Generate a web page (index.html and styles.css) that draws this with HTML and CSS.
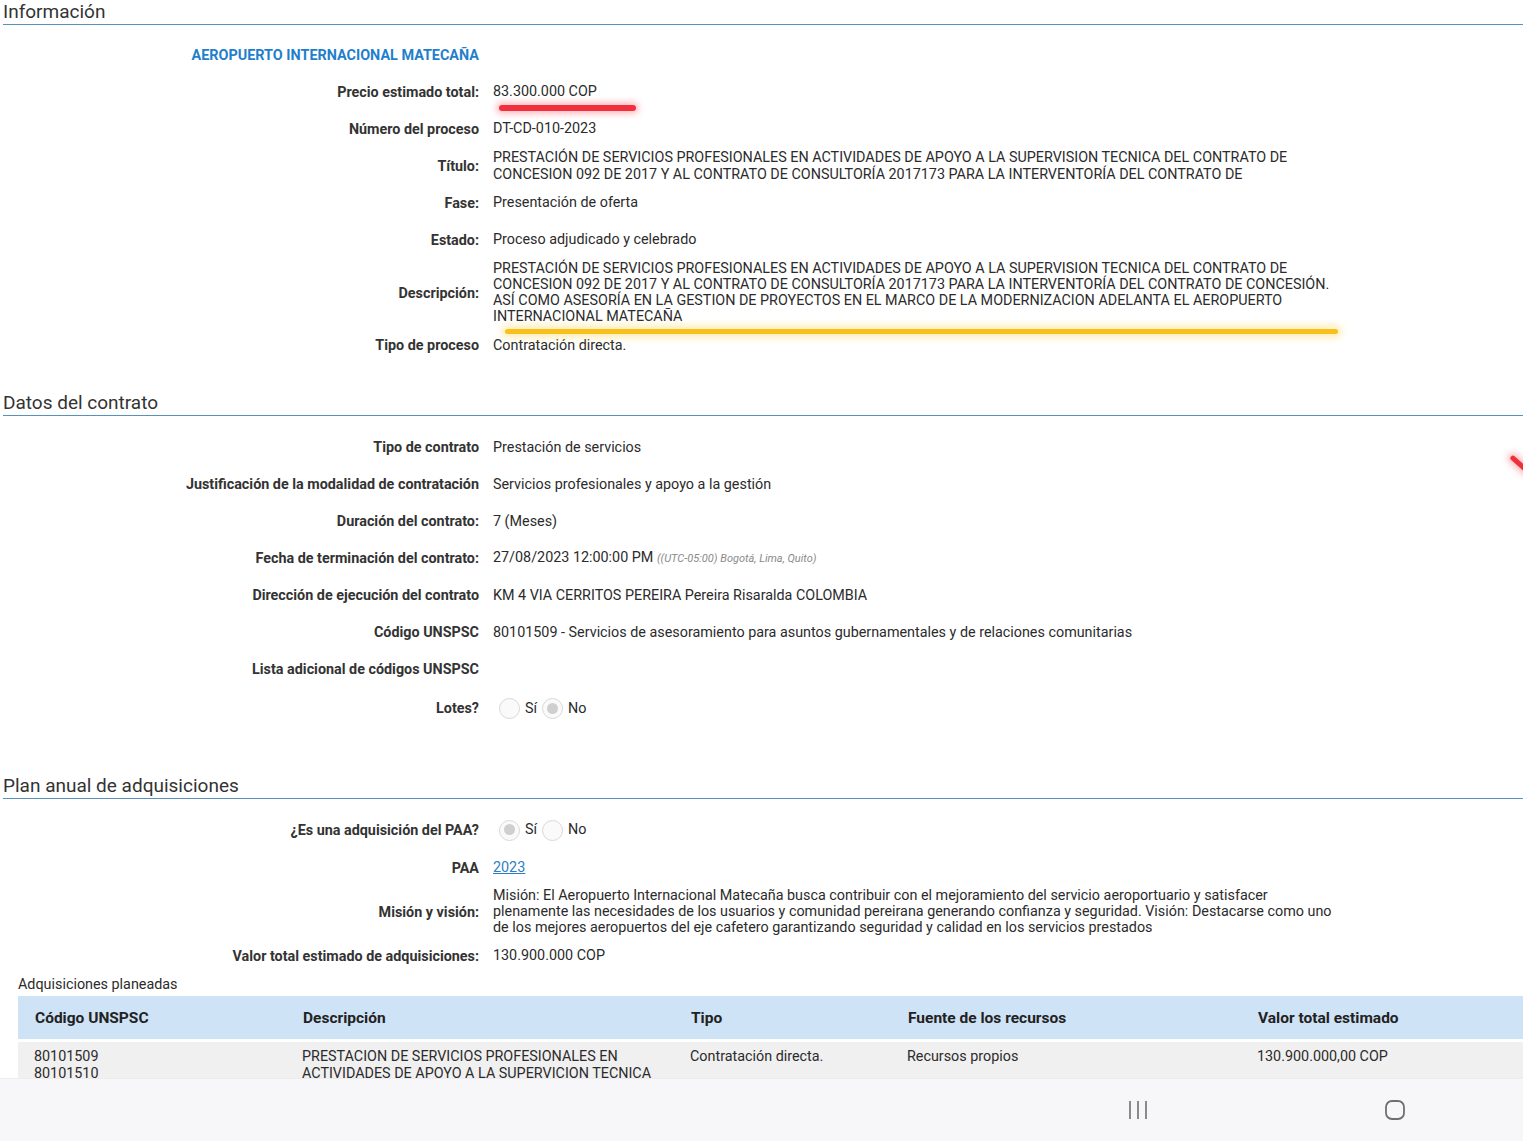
FILE: index.html
```html
<!DOCTYPE html>
<html lang="es">
<head>
<meta charset="utf-8">
<title>Información del proceso</title>
<link rel="stylesheet" href="styles.css">
</head>
<body>
<div class="page">
  <section class="sec sec-info">
    <h2 class="sec-title">Información</h2>
    <div class="rows">
      <div class="row"><div class="lbl entity">AEROPUERTO INTERNACIONAL MATECAÑA</div><div class="val"></div></div>
      <div class="row"><div class="lbl">Precio estimado total:</div><div class="val">83.300.000 COP</div></div>
      <div class="row"><div class="lbl">Número del proceso</div><div class="val">DT-CD-010-2023</div></div>
      <div class="row"><div class="lbl">Título:</div><div class="val">PRESTACIÓN DE SERVICIOS PROFESIONALES EN ACTIVIDADES DE APOYO A LA SUPERVISION TECNICA DEL CONTRATO DE CONCESION 092 DE 2017 Y AL CONTRATO DE CONSULTORÍA 2017173 PARA LA INTERVENTORÍA DEL CONTRATO DE</div></div>
      <div class="row"><div class="lbl">Fase:</div><div class="val">Presentación de oferta</div></div>
      <div class="row"><div class="lbl">Estado:</div><div class="val">Proceso adjudicado y celebrado</div></div>
      <div class="row"><div class="lbl">Descripción:</div><div class="val">PRESTACIÓN DE SERVICIOS PROFESIONALES EN ACTIVIDADES DE APOYO A LA SUPERVISION TECNICA DEL CONTRATO DE CONCESION 092 DE 2017 Y AL CONTRATO DE CONSULTORÍA 2017173 PARA LA INTERVENTORÍA DEL CONTRATO DE CONCESIÓN. ASÍ COMO ASESORÍA EN LA GESTION DE PROYECTOS EN EL MARCO DE LA MODERNIZACION ADELANTA EL AEROPUERTO INTERNACIONAL MATECAÑA</div></div>
      <div class="row"><div class="lbl">Tipo de proceso</div><div class="val">Contratación directa.</div></div>
    </div>
  </section>

  <section class="sec sec-datos">
    <h2 class="sec-title">Datos del contrato</h2>
    <div class="rows">
      <div class="row"><div class="lbl">Tipo de contrato</div><div class="val">Prestación de servicios</div></div>
      <div class="row"><div class="lbl">Justificación de la modalidad de contratación</div><div class="val">Servicios profesionales y apoyo a la gestión</div></div>
      <div class="row"><div class="lbl">Duración del contrato:</div><div class="val">7 (Meses)</div></div>
      <div class="row"><div class="lbl">Fecha de terminación del contrato:</div><div class="val">27/08/2023 12:00:00 PM <span class="tz">((UTC-05:00) Bogotá, Lima, Quito)</span></div></div>
      <div class="row"><div class="lbl">Dirección de ejecución del contrato</div><div class="val">KM 4 VIA CERRITOS PEREIRA Pereira Risaralda COLOMBIA</div></div>
      <div class="row"><div class="lbl">Código UNSPSC</div><div class="val">80101509 - Servicios de asesoramiento para asuntos gubernamentales y de relaciones comunitarias</div></div>
      <div class="row"><div class="lbl">Lista adicional de códigos UNSPSC</div><div class="val"></div></div>
      <div class="row row-radio"><div class="lbl">Lotes?</div><div class="val radios"><span class="radio"></span><span class="rtxt">Sí</span><span class="radio on"></span><span class="rtxt">No</span></div></div>
    </div>
  </section>

  <section class="sec sec-plan">
    <h2 class="sec-title">Plan anual de adquisiciones</h2>
    <div class="rows">
      <div class="row row-radio"><div class="lbl">¿Es una adquisición del PAA?</div><div class="val radios"><span class="radio on"></span><span class="rtxt">Sí</span><span class="radio"></span><span class="rtxt">No</span></div></div>
      <div class="row row-paa"><div class="lbl">PAA</div><div class="val"><a class="link" href="#">2023</a></div></div>
      <div class="row"><div class="lbl">Misión y visión:</div><div class="val">Misión: El Aeropuerto Internacional Matecaña busca contribuir con el mejoramiento del servicio aeroportuario y satisfacer plenamente las necesidades de los usuarios y comunidad pereirana generando confianza y seguridad. Visión: Destacarse como uno de los mejores aeropuertos del eje cafetero garantizando seguridad y calidad en los servicios prestados</div></div>
      <div class="row"><div class="lbl">Valor total estimado de adquisiciones:</div><div class="val">130.900.000 COP</div></div>
    </div>
    <div class="caption">Adquisiciones planeadas</div>
    <div class="table">
      <div class="thead">
        <div class="c c1">Código UNSPSC</div>
        <div class="c c2">Descripción</div>
        <div class="c c3">Tipo</div>
        <div class="c c4">Fuente de los recursos</div>
        <div class="c c5">Valor total estimado</div>
      </div>
      <div class="trow">
        <div class="c c1">80101509<br>80101510</div>
        <div class="c c2">PRESTACION DE SERVICIOS PROFESIONALES EN ACTIVIDADES DE APOYO A LA SUPERVICION TECNICA</div>
        <div class="c c3">Contratación directa.</div>
        <div class="c c4">Recursos propios</div>
        <div class="c c5">130.900.000,00 COP</div>
      </div>
    </div>
  </section>
</div>

<span class="mark mark-red"></span>
<span class="mark mark-yellow"></span>
<span class="mark mark-edge"></span>

<nav class="navbar">
  <svg class="nav-ico recents" width="22" height="20" viewBox="0 0 22 20"><path d="M3 1v18M11 1v18M19 1v18" stroke="#6f6f6f" stroke-width="1.6" fill="none"/></svg>
  <svg class="nav-ico home" width="22" height="22" viewBox="0 0 22 22"><rect x="2" y="2" width="18" height="18" rx="6" stroke="#6f6f6f" stroke-width="1.8" fill="none"/></svg>
</nav>
</body>
</html>
```

FILE: styles.css
```css
* { box-sizing: border-box; }
html, body { margin: 0; padding: 0; }
body {
  width: 1523px;
  height: 1141px;
  overflow: hidden;
  background: #fff;
  font-family: Roboto, "Noto Sans", "Liberation Sans", sans-serif;
  color: #2b2b2b;
  position: relative;
  font-size: 14.35px;
}
.page { padding: 0 0 0 3px; }
.sec-title {
  margin: 0;
  font-weight: 400;
  font-size: 19px;
  line-height: 23px;
  color: #333;
  border-bottom: 1.5px solid #5792bf;
  padding-bottom: 1px;
}
.rows { display: flex; flex-direction: column; }
.sec-info .rows { padding-top: 12px; }
.sec-datos { margin-top: 27px; }
.sec-datos .rows { padding-top: 13px; }
.sec-plan { margin-top: 46px; }
.sec-plan .rows { padding-top: 11px; }
.row {
  display: grid;
  grid-template-columns: 476px 846px;
  column-gap: 14px;
  align-items: center;
  min-height: 37px;
  padding: 1.5px 0;
}
.row-radio { min-height: 40px; }
.sec-datos .row-radio { padding-top: 2.5px; }
.row-paa { min-height: 36px; }
.lbl {
  text-align: right;
  font-weight: 700;
  font-size: 14.35px;
  color: #333;
}
.lbl.entity { color: #1f7fcc; font-size: 14.4px; }
.val {
  font-size: 14.35px;
  line-height: 16.3px;
  color: #2b2b2b;
}
.tz { font-size: 11px; font-style: italic; color: #8a8a8a; }
.link { color: #2a7fc4; text-decoration: underline; }
.radios { display: flex; align-items: center; padding-left: 6px; }
.radio {
  width: 21px; height: 21px;
  border-radius: 50%;
  border: 1.5px solid #d8d8d8;
  background: #fafafa;
  display: inline-block;
  position: relative;
}
.radio.on::after {
  content: "";
  position: absolute;
  left: 3.5px; top: 3.5px;
  width: 11px; height: 11px;
  border-radius: 50%;
  background: #cfcfcf;
}
.rtxt { margin: 0 5px 0 5px; }
.caption {
  margin: 1px 0 0 15px;
  font-size: 14.35px;
  line-height: 17px;
  color: #2b2b2b;
}
.table { margin: 3px 0 0 15px; }
.thead, .trow {
  display: grid;
  grid-template-columns: 268px 388px 217px 350px 282px;
}
.thead {
  background: #cfe3f7;
  height: 43px;
  align-items: center;
  font-weight: 700;
  font-size: 15.5px;
  color: #222;
}
.trow {
  margin-top: 3px;
  background: #f0f0f0;
  padding: 7px 0 6px;
  font-size: 14.35px;
  line-height: 16.5px;
  border-bottom: 1px solid #ddd;
}
.c { padding-left: 17px; }
.trow .c { padding-left: 16px; padding-right: 10px; }

.mark { position: absolute; display: block; border-radius: 3px; }
.mark-red {
  left: 499px; top: 105px; width: 137px; height: 6px;
  background: #f0303c;
  box-shadow: 0 0 6px 3px rgba(255, 70, 80, 0.35);
}
.mark-yellow {
  left: 505px; top: 329px; width: 833px; height: 5px;
  background: #f9c01c;
  box-shadow: 0 0 7px 4px rgba(255, 205, 60, 0.35);
}
.mark-edge {
  left: 1508px; top: 462px; width: 24px; height: 5px;
  background: #f03038;
  transform: rotate(42deg);
  box-shadow: 0 0 6px 3px rgba(255, 70, 80, 0.35);
}
.navbar {
  position: absolute;
  left: 0; right: 0; top: 1078px; bottom: 0;
  background: #f7f7f9;
  border-top: 1px solid #ececef;
}
.nav-ico { position: absolute; }
.recents { left: 1127px; top: 21px; }
.home { left: 1384px; top: 20px; }
```
